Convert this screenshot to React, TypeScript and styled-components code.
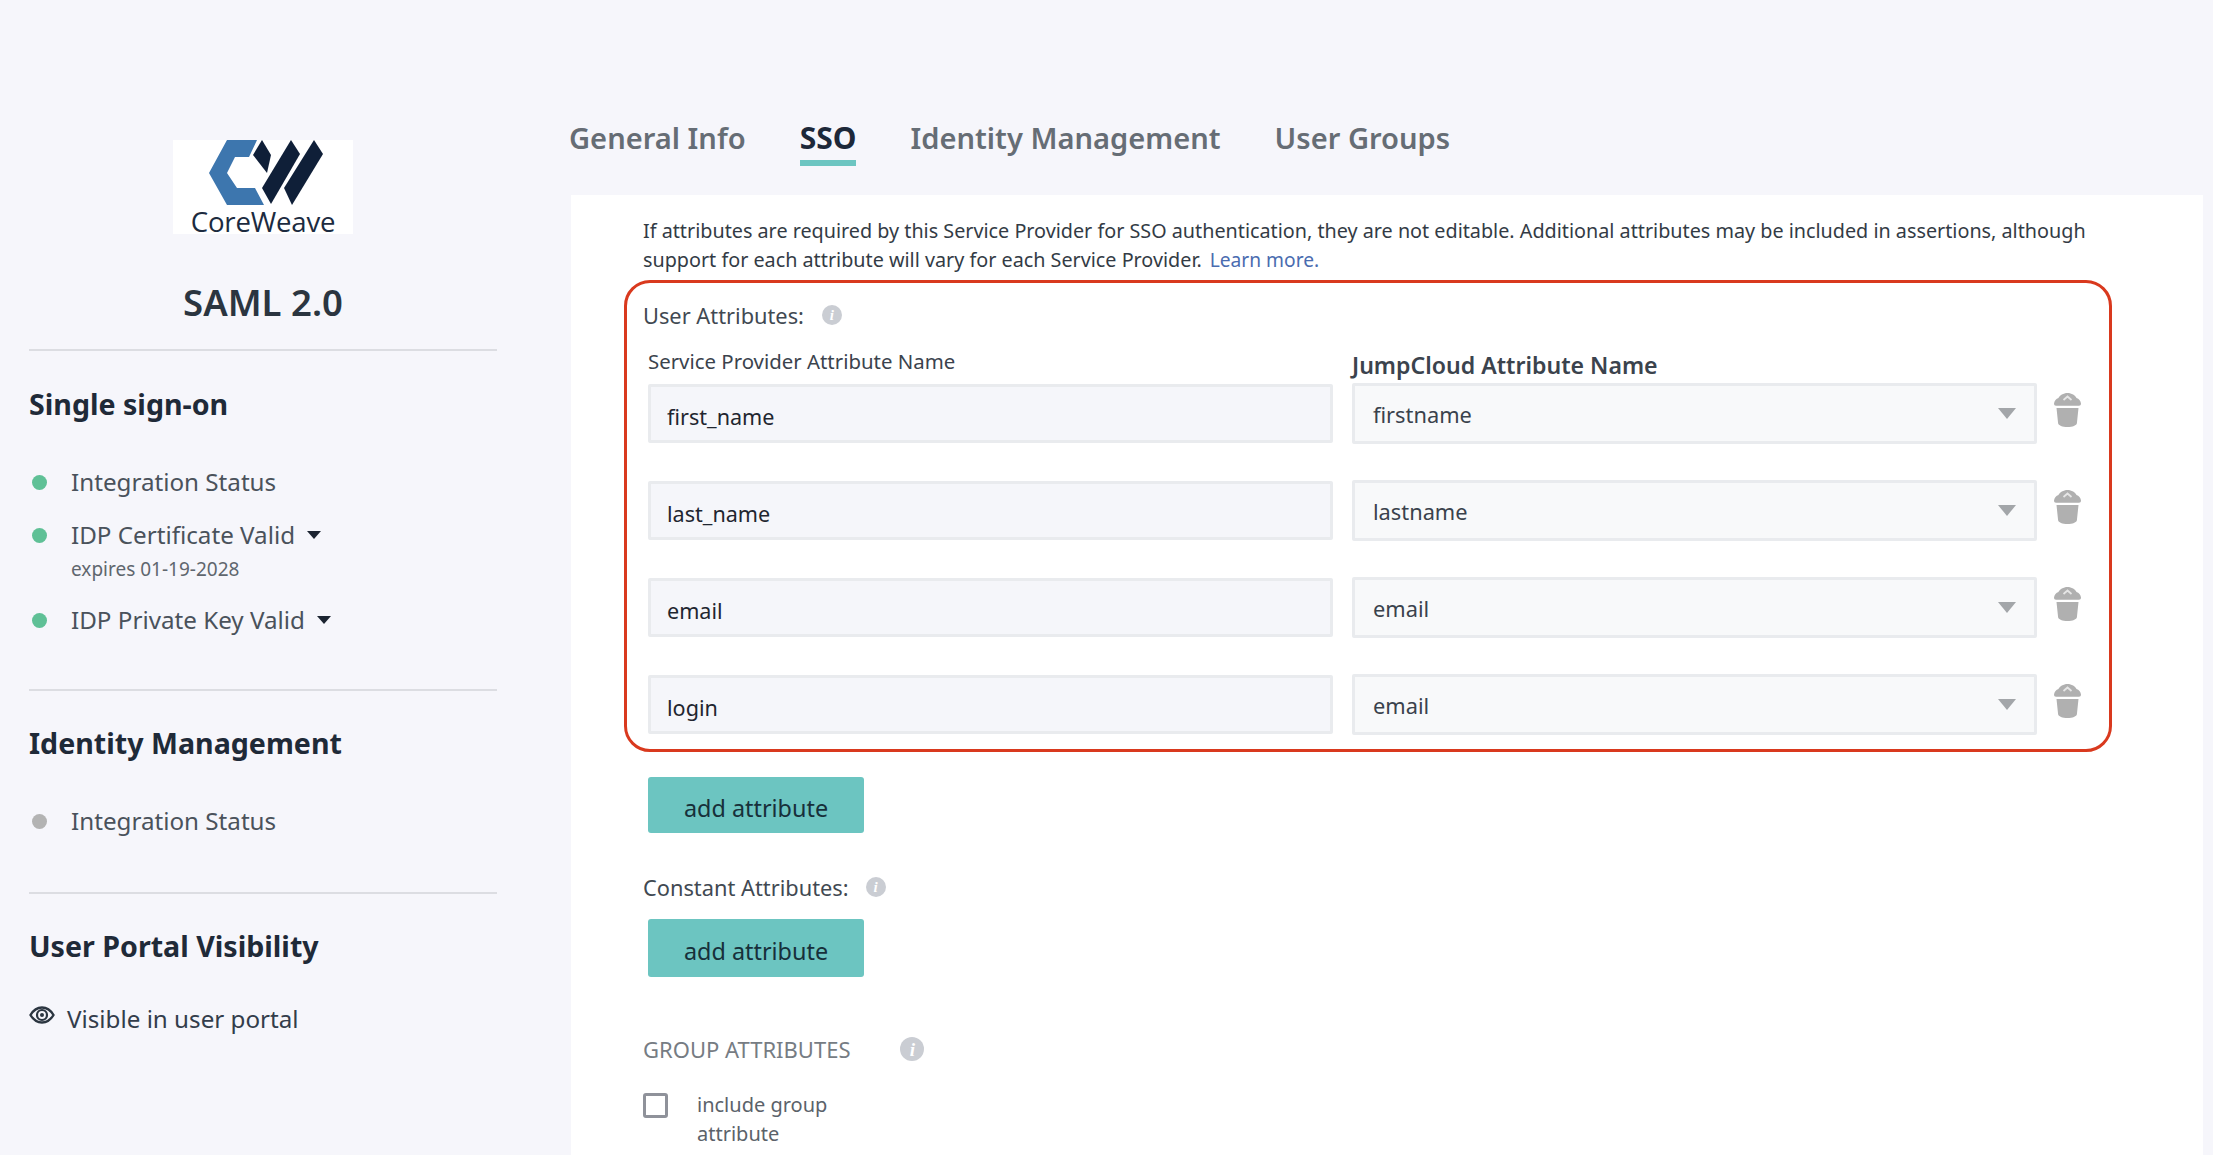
import React, { FC } from 'react';
import styled, { createGlobalStyle } from 'styled-components';

const GlobalStyle = createGlobalStyle`
  html, body {
    margin: 0;
    padding: 0;
    height: 1155px;
    overflow: hidden;
    background: #f6f6fb;
    font-family: 'Noto Sans', 'Open Sans', sans-serif;
    color: #2b3540;
  }
  * { box-sizing: border-box; }
`;

const Page = styled.div`
  display: flex;
  width: 2213px;
  height: 1155px;
  overflow: hidden;
`;

const Sidebar = styled.aside`
  width: 569px;
  flex: none;
  padding: 140px 72px 0 29px;
`;

const LogoBox = styled.div`
  width: 180px;
  height: 94px;
  margin: 0 auto;
  background: #fff;
  display: flex;
  flex-direction: column;
  align-items: center;
`;

const LogoMark = styled.svg`
  display: block;
  width: 180px;
  height: 65px;
  flex: none;
`;

const LogoText = styled.div`
  margin-top: 3px;
  font-family: 'Open Sans', sans-serif;
  font-size: 27.6px;
  line-height: 26px;
  color: #1c2b40;
  letter-spacing: -0.2px;
`;

const AppTitle = styled.h1`
  margin: 48px 0 0;
  font-size: 36.5px;
  line-height: 40px;
  font-weight: 600;
  text-align: center;
  color: #2b3540;
`;

const Divider = styled.hr<{ $top: number }>`
  margin: ${(p) => p.$top}px 0 0;
  border: 0;
  height: 2px;
  background: #dcdde2;
`;

const SectionTitle = styled.h2<{ $top: number }>`
  margin: ${(p) => p.$top}px 0 0;
  font-size: 28.6px;
  line-height: 34px;
  font-weight: 700;
  color: #1f2a38;
`;

const StatusRow = styled.div<{ $top: number }>`
  display: flex;
  align-items: center;
  margin-top: ${(p) => p.$top}px;
  height: 30px;
  font-size: 24.2px;
  color: #4a525b;
`;

const Dot = styled.span<{ $color: string }>`
  width: 15px;
  height: 15px;
  margin: 2px 24px 0 3px;
  border-radius: 50%;
  background: ${(p) => p.$color};
  flex: none;
`;

const SideCaret = styled.span`
  width: 0;
  height: 0;
  margin: 2px 0 0 12px;
  border-left: 7px solid transparent;
  border-right: 7px solid transparent;
  border-top: 8px solid #1c2431;
`;

const Expires = styled.div`
  margin: 8px 0 0 42px;
  font-size: 19px;
  line-height: 24px;
  color: #5f666e;
`;

const VisibleRow = styled.div`
  display: flex;
  align-items: center;
  margin-top: 40px;
  height: 30px;
  font-size: 24.2px;
  color: #333d4b;
`;

const EyeIcon = styled.svg`
  width: 26px;
  height: 20px;
  margin: -6px 12px 0 0;
  flex: none;
`;

const Main = styled.main`
  flex: 1;
  min-width: 0;
`;

const Tabs = styled.nav`
  display: flex;
  gap: 54px;
  padding-top: 118px;
`;

const Tab = styled.div<{ $active?: boolean }>`
  height: 48px;
  font-size: ${(p) => (p.$active ? 30 : 29.1)}px;
  line-height: 40px;
  font-weight: ${(p) => (p.$active ? 700 : 600)};
  color: ${(p) => (p.$active ? '#1d2839' : '#666d75')};
  border-bottom: 6px solid ${(p) => (p.$active ? '#6cc5c1' : 'transparent')};
`;

const Panel = styled.section`
  width: 1632px;
  height: 960px;
  margin: 29px 0 0 2px;
  padding: 21px 0 0 72px;
  background: #fff;
`;

const IntroLine = styled.div`
  font-size: 19.77px;
  line-height: 29px;
  white-space: nowrap;
  color: #333b45;
`;

const LearnMore = styled.a`
  margin-left: 8px;
  font-size: 19.2px;
  color: #4a6cb0;
`;

const Highlight = styled.div`
  width: 1488px;
  height: 472px;
  margin: 6px 0 0 -19px;
  padding: 17px 0 0 16px;
  border: 3px solid #d9391e;
  border-radius: 26px;
`;

const FieldLabel = styled.div<{ $top?: number }>`
  display: flex;
  align-items: center;
  margin-top: ${(p) => p.$top ?? 0}px;
  height: 30px;
  font-size: 21.8px;
  color: #414952;
`;

const InfoIcon = styled.span<{ $size?: number; $gap?: number }>`
  display: inline-flex;
  align-items: center;
  justify-content: center;
  width: ${(p) => p.$size ?? 20}px;
  height: ${(p) => p.$size ?? 20}px;
  margin-left: ${(p) => p.$gap ?? 18}px;
  border-radius: 50%;
  background: #cacdd3;
  color: #fff;
  font-family: 'Liberation Serif', serif;
  font-style: italic;
  font-weight: 700;
  font-size: ${(p) => (p.$size ?? 20) - 5}px;
  line-height: 1;
`;

const ColumnHeads = styled.div`
  display: grid;
  grid-template-columns: 685px 685px;
  column-gap: 19px;
  height: 53px;
  padding-left: 5px;
`;

const ColumnHead = styled.div<{ $top: number; $bold?: boolean }>`
  padding-top: ${(p) => p.$top}px;
  font-size: ${(p) => (p.$bold ? 23.1 : 20.4)}px;
  line-height: 26px;
  font-weight: ${(p) => (p.$bold ? 600 : 400)};
  color: #3b434d;
`;

const AttrRows = styled.div`
  display: flex;
  flex-direction: column;
  gap: 36px;
  padding-left: 5px;
`;

const AttrRow = styled.div`
  display: grid;
  grid-template-columns: 685px 685px 27px;
  column-gap: 19px;
  height: 61px;
`;

const NameInput = styled.input`
  width: 685px;
  height: 59px;
  margin-top: 1px;
  padding: 6px 16px 0;
  border: 3px solid #e9ebee;
  border-radius: 2px;
  background: #f5f6fa;
  font-family: inherit;
  font-size: 21.6px;
  color: #1f2630;
  outline: none;
`;

const SelectBox = styled.div`
  display: flex;
  align-items: center;
  justify-content: space-between;
  height: 61px;
  padding: 2px 18px 0;
  border: 3px solid #e9ebee;
  border-radius: 2px;
  background: #f8f9fa;
  font-size: 21.8px;
  color: #3a424c;
`;

const SelectCaret = styled.span`
  width: 0;
  height: 0;
  margin-top: -2px;
  border-left: 9px solid transparent;
  border-right: 9px solid transparent;
  border-top: 11px solid #a3a6a9;
`;

const TrashIcon = styled.svg`
  display: block;
  width: 27px;
  height: 34px;
  margin: 10px 0 0 -2px;
`;

const AddButton = styled.button<{ $top: number; $height: number }>`
  display: block;
  width: 216px;
  height: ${(p) => p.$height}px;
  margin: ${(p) => p.$top}px 0 0 5px;
  border: 0;
  border-radius: 3px;
  background: #6cc5c1;
  font-family: inherit;
  font-size: 23.4px;
  padding: 5px 0 0;
  color: #17303a;
`;

const GroupLabel = styled.div`
  display: flex;
  align-items: center;
  margin-top: 57px;
  height: 30px;
  font-size: 22px;
  color: #767c83;
`;

const CheckRow = styled.label`
  display: flex;
  margin-top: 27px;
`;

const CheckBox = styled.span`
  width: 25px;
  height: 25px;
  margin-top: 2px;
  flex: none;
  border: 3px solid #8f929a;
  border-radius: 3px;
  background: #fff;
`;

const CheckText = styled.span`
  width: 170px;
  margin: -1px 0 0 29px;
  font-size: 20px;
  line-height: 29px;
  color: #5b626a;
`;

const rows: [string, string][] = [
  ['first_name', 'firstname'],
  ['last_name', 'lastname'],
  ['email', 'email'],
  ['login', 'email'],
];

const Trash: FC = () => (
  <TrashIcon viewBox="0 0 27 34">
    <path
      fill="#b0b0b0"
      d="M13.5 0C9.5 0 5.5 2.5 4.5 5 2 6 .5 7.5 0 10.5c0 1.6.8 2.2 2 2.2h23c1.2 0 2-.6 2-2.2C26.5 7.5 25 6 22.5 5 21.5 2.5 17.5 0 13.5 0Z"
    />
    <path fill="none" stroke="#e6e6e6" strokeWidth="1.8" d="M9.5 7 13.5 3.5 17.5 7" />
    <path
      fill="#b0b0b0"
      d="M2.5 15h22l-1.6 15.2c-.2 2-4.4 3.8-9.4 3.8s-9.2-1.8-9.4-3.8L2.5 15Z"
    />
  </TrashIcon>
);

const App: FC = () => (
  <Page>
    <GlobalStyle />
    <Sidebar>
      <LogoBox>
        <LogoMark viewBox="0 0 180 65">
          <polygon fill="#3d76ae" points="54,0 84,0 76,17 62,17 54,33 64,48 82,48 91,65 54,65 36,33" />
          <polygon fill="#0f1f38" points="89,0 98,15 94,33 80,15" />
          <polygon fill="#0f1f38" points="118,0 127,14 98,64 89,48" />
          <polygon fill="#0f1f38" points="141,0 150,14 119,65 111,48" />
        </LogoMark>
        <LogoText>CoreWeave</LogoText>
      </LogoBox>
      <AppTitle>SAML 2.0</AppTitle>
      <Divider $top={27} />

      <SectionTitle $top={36}>Single sign-on</SectionTitle>
      <StatusRow $top={45}>
        <Dot $color="#5fc096" />
        Integration Status
      </StatusRow>
      <StatusRow $top={23}>
        <Dot $color="#5fc096" />
        IDP Certificate Valid
        <SideCaret />
      </StatusRow>
      <Expires>expires 01-19-2028</Expires>
      <StatusRow $top={23}>
        <Dot $color="#5fc096" />
        IDP Private Key Valid
        <SideCaret />
      </StatusRow>
      <Divider $top={55} />

      <SectionTitle $top={35}>Identity Management</SectionTitle>
      <StatusRow $top={45}>
        <Dot $color="#b3b3b3" />
        Integration Status
      </StatusRow>
      <Divider $top={57} />

      <SectionTitle $top={35}>User Portal Visibility</SectionTitle>
      <VisibleRow>
        <EyeIcon viewBox="0 0 26 20">
          <path
            fill="none"
            stroke="#2b3540"
            strokeWidth="2.4"
            d="M1.5 10C4.5 5 8.5 2.5 13 2.5S21.5 5 24.5 10C21.5 15 17.5 17.5 13 17.5S4.5 15 1.5 10Z"
          />
          <circle cx="13" cy="10" r="5" fill="none" stroke="#2b3540" strokeWidth="2.2" />
          <circle cx="13" cy="10" r="2" fill="#2b3540" />
        </EyeIcon>
        Visible in user portal
      </VisibleRow>
    </Sidebar>

    <Main>
      <Tabs>
        <Tab>General Info</Tab>
        <Tab $active>SSO</Tab>
        <Tab>Identity Management</Tab>
        <Tab>User Groups</Tab>
      </Tabs>
      <Panel>
        <IntroLine>
          If attributes are required by this Service Provider for SSO authentication, they are not
          editable. Additional attributes may be included in assertions, although
        </IntroLine>
        <IntroLine>
          support for each attribute will vary for each Service Provider.
          <LearnMore>Learn more.</LearnMore>
        </IntroLine>
        <Highlight>
          <FieldLabel>
            User Attributes:
            <InfoIcon $gap={18}>i</InfoIcon>
          </FieldLabel>
          <ColumnHeads>
            <ColumnHead $top={18}>Service Provider Attribute Name</ColumnHead>
            <ColumnHead $top={22} $bold>
              JumpCloud Attribute Name
            </ColumnHead>
          </ColumnHeads>
          <AttrRows>
            {rows.map(([name, value]) => (
              <AttrRow key={name}>
                <NameInput readOnly value={name} />
                <SelectBox>
                  {value}
                  <SelectCaret />
                </SelectBox>
                <Trash />
              </AttrRow>
            ))}
          </AttrRows>
        </Highlight>
        <AddButton $top={25} $height={56}>add attribute</AddButton>
        <FieldLabel $top={39}>
          Constant Attributes:
          <InfoIcon $gap={17}>i</InfoIcon>
        </FieldLabel>
        <AddButton $top={17} $height={58}>add attribute</AddButton>
        <GroupLabel>
          GROUP ATTRIBUTES
          <InfoIcon $size={24} $gap={50}>i</InfoIcon>
        </GroupLabel>
        <CheckRow>
          <CheckBox />
          <CheckText>include group attribute</CheckText>
        </CheckRow>
      </Panel>
    </Main>
  </Page>
);

export default App;
